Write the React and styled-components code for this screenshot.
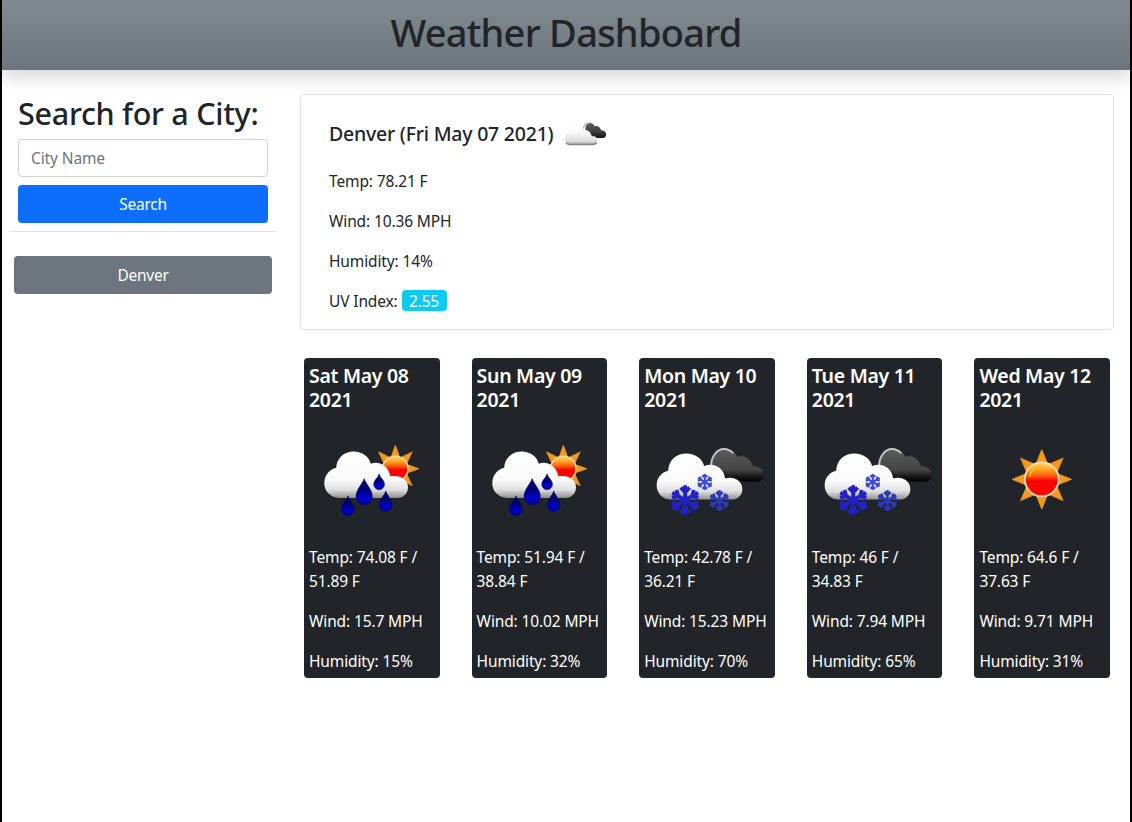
import React from 'react';
import styled, { createGlobalStyle } from 'styled-components';

const GlobalStyle = createGlobalStyle`
  *, *::before, *::after { box-sizing: border-box; }
  body {
    margin: 0;
    background: #fff;
    color: #212529;
    font-family: "Segoe UI", "Noto Sans", "Open Sans", sans-serif;
    font-size: 15.5px;
    line-height: 24px;
    letter-spacing: -0.12px;
  }
`;

const Page = styled.div`
  min-height: 100vh;
  border: solid #000;
  border-width: 0 2px;
  overflow: hidden;
`;

const Header = styled.header`
  height: 70px;
  padding-top: 8px;
  text-align: center;
  background: linear-gradient(180deg, #828a91, #6c757d);
  box-shadow: 0 8px 16px rgba(0, 0, 0, 0.15);
`;

const Title = styled.h1`
  margin: 0;
  font-size: 38px;
  font-weight: 500;
  line-height: 48px;
  letter-spacing: -0.75px;
`;

const Columns = styled.main`
  display: flex;
`;

const Sidebar = styled.aside`
  flex: 0 0 282px;
  padding: 24px 8px 0;
`;

const SearchForm = styled.form`
  display: flex;
  flex-direction: column;
  gap: 8px;
  padding: 0 8px 8px;
  border-bottom: 1px solid #dee2e6;
`;

const FormTitle = styled.h2`
  margin: 0 0 -1px;
  font-size: 30.5px;
  font-weight: 500;
  line-height: 38px;
  letter-spacing: -0.28px;
  white-space: nowrap;
`;

const CityInput = styled.input`
  width: 100%;
  height: 38px;
  padding: 6px 12px;
  border: 1px solid #ced4da;
  border-radius: 4px;
  font: inherit;
  letter-spacing: inherit;
  color: #212529;
  &::placeholder { color: #6c757d; opacity: 1; }
`;

const Button = styled.button`
  height: 38px;
  width: 100%;
  padding: 0;
  border: 0;
  border-radius: 4px;
  font: inherit;
  letter-spacing: -0.25px;
  color: #fff;
  background: ${(p) => (p.$primary ? '#0d6efd' : '#6c757d')};
`;

const History = styled.div`
  padding: 24px 4px 0;
`;

const Content = styled.section`
  flex: 1;
  padding: 24px 16px 0;
`;

const CurrentCard = styled.article`
  height: 236px;
  padding: 14px 28px 0;
  border: 1px solid #dfdfdf;
  border-radius: 4px;
`;

const CurrentHead = styled.div`
  display: flex;
  align-items: center;
  gap: 6px;
  height: 50px;
  margin-bottom: 10px;
`;

const CurrentTitle = styled.h5`
  margin: 0;
  font-size: 19.5px;
  font-weight: 500;
  letter-spacing: -0.23px;
`;

const Reading = styled.p`
  margin: 0 0 16px;
  letter-spacing: -0.13px;
`;

const UvBadge = styled.span`
  display: inline-block;
  height: 21px;
  padding: 0 7.5px;
  border-radius: 4px;
  line-height: 22px;
  letter-spacing: -0.2px;
  color: #fff;
  background: #0dcaf0;
`;

const Forecast = styled.div`
  display: grid;
  grid-template-columns: repeat(5, 1fr);
  gap: 32px;
  padding: 28px 4px 0;
`;

const DayCard = styled.article`
  height: 320px;
  padding: 6px 5px 0;
  border-radius: 4px;
  color: #fff;
  background: #212529;
`;

const DayTitle = styled.h5`
  margin: 0 0 8px;
  font-size: 19.5px;
  font-weight: 600;
  letter-spacing: -0.3px;
`;

const DayIcon = styled.svg`
  display: block;
  width: 125.6px;
  height: 125px;
  filter: blur(0.7px);
`;

const RAYS = [0, 45, 90, 135, 180, 225, 270, 315];

function SunShape({ cx, cy, r, tip }) {
  return (
    <g>
      {RAYS.map((a) => (
        <path
          key={a}
          d={`M${cx - r * 0.34} ${cy - r * 0.9}L${cx} ${cy - tip}L${cx + r * 0.34} ${cy - r * 0.9}Z`}
          fill="#f29a1c"
          stroke="#ee951a"
          strokeWidth="3"
          transform={`rotate(${a} ${cx} ${cy})`}
        />
      ))}
      <circle cx={cx} cy={cy} r={r} fill="url(#sunDisc)" stroke="#fbd9b4" strokeWidth={r * 0.11} />
    </g>
  );
}

function Drop({ x, top, bottom, w }) {
  const r = w / 2;
  const cy = bottom - r;
  return (
    <path
      d={`M${x} ${top}C${x + 3} ${top + 12} ${x + r} ${cy - r * 0.8} ${x + r} ${cy}A${r} ${r} 0 0 1 ${x - r} ${cy}C${x - r} ${cy - r * 0.8} ${x - 3} ${top + 12} ${x} ${top}Z`}
      fill="url(#drop)"
      stroke="#00006a"
      strokeWidth="2"
    />
  );
}

function Flake({ x, y, r, color }) {
  return (
    <g stroke={color} fill="none">
      {[0, 60, 120, 180, 240, 300].map((a) => (
        <path
          key={a}
          transform={`translate(${x} ${y}) rotate(${a}) scale(${r / 10})`}
          strokeWidth="2.6"
          d="M0 0V-10M-3 -8.4L0 -5.4L3 -8.4"
        />
      ))}
    </g>
  );
}

function RainIcon() {
  return (
    <DayIcon viewBox="0 0 126 125">
      <g transform="translate(11 20) scale(.3333)">
        <SunShape cx={227} cy={86} r={38} tip={70} />
        <path
          d="M58 174C32 174 13 154 13 130C13 106 28 88 49 83C50 54 73 34 101 34C127 34 148 49 153 71C179 61 207 80 212 109C241 103 265 118 265 142C265 162 251 174 232 174Z"
          fill="url(#cloud)"
        />
        <Drop x={133} top={116} bottom={194} w={49} />
        <Drop x={178} top={102} bottom={149} w={32} />
        <Drop x={84} top={168} bottom={227} w={38} />
        <Drop x={198} top={153} bottom={214} w={38} />
      </g>
    </DayIcon>
  );
}

function SnowIcon() {
  return (
    <DayIcon viewBox="0 0 126 125">
      <g transform="translate(6 20) scale(.3333)">
        <path
          d="M186 122V66C190 39 207 25 224 25C243 25 257 35 264 50C285 44 304 58 309 78C329 78 343 91 343 105C343 118 334 125 318 125Z"
          fill="url(#darkCloud)"
        />
        <path d="M184 76C185 45 205 27 222 27C234 27 243 32 250 40" fill="none" stroke="#c4c4c4" strokeWidth="6" />
        <path
          d="M62 179C38 179 20 160 20 136C20 113 35 96 55 92C56 61 78 40 109 40C138 40 158 57 163 78C194 66 223 86 226 115C254 108 278 123 278 147C278 167 264 179 244 179Z"
          fill="url(#cloud)"
        />
        <Flake x={106} y={181} r={45} color="#2222c4" />
        <Flake x={165} y={126} r={24} color="#3b4be0" />
        <Flake x={209} y={182} r={31} color="#2d38b4" />
      </g>
    </DayIcon>
  );
}

function SunIcon() {
  return (
    <DayIcon viewBox="0 0 126 125">
      <g transform="translate(21 20) scale(.3333)">
        <SunShape cx={126} cy={118} r={51} tip={89} />
        <path d="M90 110C92 92 103 80 118 76" fill="none" stroke="#ffc21a" strokeWidth="5" />
      </g>
    </DayIcon>
  );
}

const SmallIcon = styled.svg`
  width: 50px;
  height: 50px;
`;

function CloudsIcon() {
  return (
    <SmallIcon viewBox="0 0 50 50">
      <g transform="translate(1.2 5) scale(.3333)">
        <path
          d="M76 48C75 36 80 27 89 26C97 27 101 31 103 37C113 34 121 41 123 49C132 49 138 54 138 61C138 68 134 72 127 72H100Z"
          fill="url(#darkSmall)"
        />
        <path d="M69 43C72 32 79 27 88 27" fill="none" stroke="#b5b5b5" strokeWidth="4" />
        <path
          d="M30 92C20 92 14 83 14 74C14 65 20 58 28 56C29 43 38 35 49 35C60 35 67 42 69 50C82 46 92 54 94 67C105 65 111 71 111 80C111 87 107 92 98 92Z"
          fill="url(#smallCloud)"
          stroke="#e2e2e2"
          strokeWidth="1"
        />
        <path d="M17 86C21 91 25 92 30 92H98C104 92 107 90 109 86" fill="none" stroke="#858585" strokeWidth="4" />
      </g>
    </SmallIcon>
  );
}

const Defs = styled.svg`
  display: block;
  width: 0;
  height: 0;
`;

function Gradients() {
  const stops = {
    cloud: [[0, '#ffffff'], [0.6, '#fafafa'], [0.82, '#e0e0e0'], [1, '#8e8e8e']],
    smallCloud: [[0, '#ffffff'], [0.4, '#f8f8f8'], [0.85, '#d8d8d8'], [1, '#8a8a8a']],
    darkCloud: [[0, '#5c5c5c'], [0.65, '#444444'], [0.82, '#1c1c1c'], [1, '#000000']],
    darkSmall: [[0, '#606060'], [0.6, '#3d3d3d'], [1, '#111111']],
    sunDisc: [[0, '#ffd35c'], [0.18, '#ffb02a'], [0.4, '#ff5a08'], [0.54, '#ff0000'], [1, '#ff0500']],
    drop: [[0, '#000055'], [0.45, '#00007c'], [0.75, '#0000cf'], [1, '#000090']],
  };
  return (
    <Defs aria-hidden="true">
      <defs>
        {Object.entries(stops).map(([id, list]) => (
          <linearGradient key={id} id={id} x1="0" y1="0" x2="0" y2="1">
            {list.map(([o, c]) => (
              <stop key={o} offset={o} stopColor={c} />
            ))}
          </linearGradient>
        ))}
      </defs>
    </Defs>
  );
}

const DAYS = [
  { date: 'Sat May 08 2021', Icon: RainIcon, temp: '74.08 F / 51.89 F', wind: '15.7', humidity: 15 },
  { date: 'Sun May 09 2021', Icon: RainIcon, temp: '51.94 F / 38.84 F', wind: '10.02', humidity: 32 },
  { date: 'Mon May 10 2021', Icon: SnowIcon, temp: '42.78 F / 36.21 F', wind: '15.23', humidity: 70 },
  { date: 'Tue May 11 2021', Icon: SnowIcon, temp: '46 F / 34.83 F', wind: '7.94', humidity: 65 },
  { date: 'Wed May 12 2021', Icon: SunIcon, temp: '64.6 F / 37.63 F', wind: '9.71', humidity: 31 },
];

export default function App() {
  return (
    <Page>
      <GlobalStyle />
      <Gradients />
      <Header>
        <Title>Weather Dashboard</Title>
      </Header>
      <Columns>
        <Sidebar>
          <SearchForm>
            <FormTitle>Search for a City:</FormTitle>
            <CityInput placeholder="City Name" />
            <Button type="button" $primary>Search</Button>
          </SearchForm>
          <History>
            <Button type="button">Denver</Button>
          </History>
        </Sidebar>
        <Content>
          <CurrentCard>
            <CurrentHead>
              <CurrentTitle>Denver (Fri May 07 2021)</CurrentTitle>
              <CloudsIcon />
            </CurrentHead>
            <Reading>Temp: 78.21 F</Reading>
            <Reading>Wind: 10.36 MPH</Reading>
            <Reading>Humidity: 14%</Reading>
            <Reading>UV Index: <UvBadge>2.55</UvBadge></Reading>
          </CurrentCard>
          <Forecast>
            {DAYS.map(({ date, Icon, temp, wind, humidity }) => (
              <DayCard key={date}>
                <DayTitle>{date}</DayTitle>
                <Icon />
                <Reading>{`Temp: ${temp}`}</Reading>
                <Reading>{`Wind: ${wind} MPH`}</Reading>
                <Reading>{`Humidity: ${humidity}%`}</Reading>
              </DayCard>
            ))}
          </Forecast>
        </Content>
      </Columns>
    </Page>
  );
}
